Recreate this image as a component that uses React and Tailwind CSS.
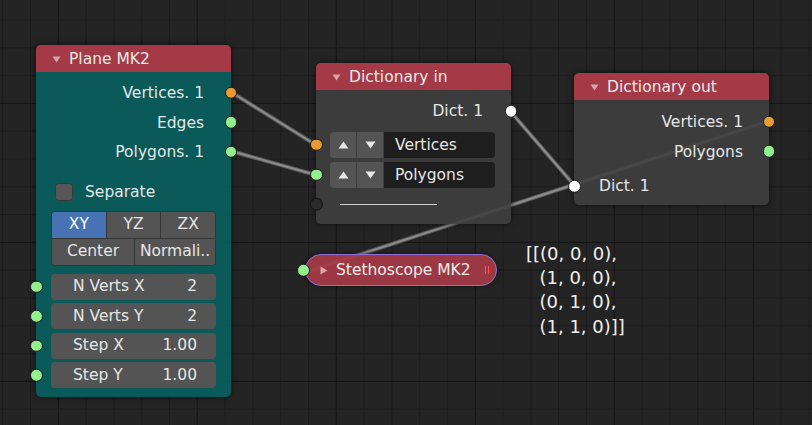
import React from 'react';

const W = 812;
const H = 425;
const STEP = 27.8;

function Grid() {
  const lines = [];
  for (let i = 0; i < 32; i++) {
    const x = 2.7 + i * STEP;
    const major = i % 5 === 2;
    lines.push(<line key={'v' + i} x1={x} y1={0} x2={x} y2={H} stroke={major ? '#151515' : '#1c1c1c'} strokeWidth={1} />);
  }
  for (let j = 0; j < 17; j++) {
    const y = -7.8 + j * STEP;
    const major = j % 5 === 4;
    lines.push(<line key={'h' + j} x1={0} y1={y} x2={W} y2={y} stroke={major ? '#151515' : '#1c1c1c'} strokeWidth={1} />);
  }
  return (
    <svg className="absolute inset-0" width={W} height={H}>
      {lines}
    </svg>
  );
}

function Wires() {
  const wires = [
    [231, 92, 316, 145],
    [231, 151, 316, 175],
    [510, 111, 574, 185],
    [769, 121, 303, 273],
  ];
  return (
    <svg className="absolute inset-0" width={W} height={H}>
      {wires.map(([x1, y1, x2, y2], i) => (
        <g key={i}>
          <line x1={x1} y1={y1} x2={x2} y2={y2} stroke="#5c5c5c" strokeWidth={4} />
          <line x1={x1} y1={y1} x2={x2} y2={y2} stroke="#8c8c8c" strokeWidth={2} />
        </g>
      ))}
    </svg>
  );
}

function Caret() {
  return (
    <svg width="9" height="7" viewBox="0 0 9 7" className="shrink-0">
      <path d="M0.5 0.5 L8.5 0.5 L4.5 6.5 Z" fill="#d6a3aa" />
    </svg>
  );
}

function Header({ title }) {
  return (
    <div className="h-[27px] bg-[#a33a46] rounded-t-[5px] flex items-center pl-[16px] pt-[2px] gap-[8px] text-[#e8e8e8]">
      <Caret />
      <span>{title}</span>
    </div>
  );
}

function Socket({ className }) {
  return <span className={`absolute w-[12.5px] h-[12.5px] rounded-full border border-[#1b1b1b] top-1/2 -translate-y-1/2 ${className}`} />;
}

function NumRow({ label, value }) {
  return (
    <div className="relative h-[26px] rounded-[4px] bg-[#545454] flex items-center justify-between pl-[22px] pr-[19px] pt-[1px]">
      <Socket className="left-[-21px] bg-[#94f08f]" />
      <span>{label}</span>
      <span>{value}</span>
    </div>
  );
}

function ArrowBtn({ up }) {
  return (
    <div className="w-[27px] h-full bg-[#545454] flex items-center justify-center border-r border-[#3e3e3e]">
      <svg width="11" height="8" viewBox="0 0 11 8">
        <path d={up ? 'M0.5 7.5 L10.5 7.5 L5.5 0.5 Z' : 'M0.5 0.5 L10.5 0.5 L5.5 7.5 Z'} fill="#e6e6e6" />
      </svg>
    </div>
  );
}

function DictRow({ label, socket }) {
  return (
    <div className="relative h-[25.5px] flex rounded-[4px]">
      <Socket className={`left-[-20px] ${socket}`} />
      <div className="flex h-full rounded-l-[4px] overflow-hidden">
        <ArrowBtn up />
        <ArrowBtn />
      </div>
      <div className="flex-1 h-full bg-[#1e1e1e] rounded-r-[4px] flex items-center pl-[11px] pt-[2px]">{label}</div>
    </div>
  );
}

function PlaneNode() {
  return (
    <div className="absolute left-[36px] top-[45px] w-[195px] h-[352px] rounded-[5px] bg-[#07605f]/90 shadow-[0_0_6px_rgba(0,0,0,0.6)]">
      <Header title="Plane MK2" />
      <div className="pt-[6px] flex flex-col">
        {['Vertices. 1', 'Edges', 'Polygons. 1'].map((t, i) => (
          <div key={t} className="relative h-[29.5px] flex items-center justify-end pr-[27px]">
            <span className="pt-[2px]">{t}</span>
            <Socket className={`right-[-6px] ${i === 0 ? 'bg-[#e89a33]' : 'bg-[#94f08f]'}`} />
          </div>
        ))}
      </div>
      <div className="mt-[16px] h-[19px] flex items-center gap-[12px] pl-[19px]">
        <span className="w-[18px] h-[18px] rounded-[4px] bg-[#575757] border border-[#3a3a3a]" />
        <span className="pt-[1px]">Separate</span>
      </div>
      <div className="mx-[15px] mt-[9px] rounded-[4px] overflow-hidden border border-[#353535] bg-[#353535] flex flex-col gap-px">
        <div className="grid grid-cols-3 gap-px h-[26px]">
          <div className="bg-[#4772b3] flex items-center justify-center pt-[1px] text-white">XY</div>
          <div className="bg-[#545454] flex items-center justify-center pt-[1px]">YZ</div>
          <div className="bg-[#545454] flex items-center justify-center pt-[1px]">ZX</div>
        </div>
        <div className="grid grid-cols-[82px_1fr] gap-px h-[26px]">
          <div className="bg-[#545454] flex items-center justify-center pt-[1px]">Center</div>
          <div className="bg-[#545454] flex items-center justify-center pt-[1px]">Normali..</div>
        </div>
      </div>
      <div className="mx-[15px] mt-[8px] flex flex-col gap-[3.5px]">
        <NumRow label="N Verts X" value="2" />
        <NumRow label="N Verts Y" value="2" />
        <NumRow label="Step X" value="1.00" />
        <NumRow label="Step Y" value="1.00" />
      </div>
    </div>
  );
}

function DictInNode() {
  return (
    <div className="absolute left-[316px] top-[63px] w-[195px] h-[161px] rounded-[5px] bg-[#3f3f3f]/90 shadow-[0_0_6px_rgba(0,0,0,0.6)]">
      <Header title="Dictionary in" />
      <div className="relative mt-[6px] h-[30px] flex items-center justify-end pr-[28px]">
        <span className="pt-[2px]">Dict. 1</span>
        <Socket className="right-[-6px] bg-white" />
      </div>
      <div className="mt-[6px] pl-[14px] pr-[16px] flex flex-col gap-[4.5px]">
        <DictRow label="Vertices" socket="bg-[#e89a33]" />
        <DictRow label="Polygons" socket="bg-[#94f08f]" />
      </div>
      <div className="relative mt-[4px] h-[25px] flex items-center pl-[24px]">
        <Socket className="left-[-6px] bg-[#2a2a2a] border-[#121212]" />
        <span className="w-[97px] h-px bg-[#d0d0d0]" />
      </div>
    </div>
  );
}

function DictOutNode() {
  return (
    <div className="absolute left-[574px] top-[73px] w-[195px] h-[132px] rounded-[5px] bg-[#3f3f3f]/90 shadow-[0_0_6px_rgba(0,0,0,0.6)]">
      <Header title="Dictionary out" />
      <div className="pt-[7px] flex flex-col">
        <div className="relative h-[29.5px] flex items-center justify-end pr-[26px]">
          <span className="pt-[2px]">Vertices. 1</span>
          <Socket className="right-[-6px] bg-[#e89a33]" />
        </div>
        <div className="relative h-[29.5px] flex items-center justify-end pr-[26px]">
          <span className="pt-[2px]">Polygons</span>
          <Socket className="right-[-6px] bg-[#94f08f]" />
        </div>
        <div className="relative mt-[5px] h-[30px] flex items-center pl-[25px]">
          <Socket className="left-[-6px] bg-white" />
          <span className="pt-[2px]">Dict. 1</span>
        </div>
      </div>
    </div>
  );
}

function StethoscopeNode() {
  return (
    <div className="absolute left-[305px] top-[254px] w-[192px] h-[32px] rounded-full bg-[#a33a46]/95 border border-[#8a70d8] flex items-center pl-[14px] shadow-[0_0_5px_rgba(0,0,0,0.5)]">
      <Socket className="left-[-9px] bg-[#94f08f]" />
      <svg width="8" height="9" viewBox="0 0 8 9" className="shrink-0">
        <path d="M0.5 0.5 L7.5 4.5 L0.5 8.5 Z" fill="#d6a3aa" />
      </svg>
      <span className="ml-[8px] pt-[2px] text-[#ececec]">Stethoscope MK2</span>
      <span className="ml-auto mr-[7px] flex gap-[2px]">
        <span className="w-px h-[8px] bg-[#ff4d5e]" />
        <span className="w-px h-[8px] bg-[#ff4d5e]" />
      </span>
    </div>
  );
}

export default function App() {
  return (
    <div className="relative w-[812px] h-[425px] overflow-hidden bg-[#242424] font-['DejaVu_Sans',sans-serif] text-[15.5px] text-[#e6e6e6] leading-none">
      <Grid />
      <Wires />
      <PlaneNode />
      <DictInNode />
      <DictOutNode />
      <StethoscopeNode />
      <div className="absolute left-[526px] top-[242px] text-[18px] leading-[24.2px] text-[#f0f0f0] whitespace-pre">
        <div>[[(0, 0, 0),</div>
        <div className="pl-[13.5px]">(1, 0, 0),</div>
        <div className="pl-[13.5px]">(0, 1, 0),</div>
        <div className="pl-[13.5px]">(1, 1, 0)]]</div>
      </div>
    </div>
  );
}
